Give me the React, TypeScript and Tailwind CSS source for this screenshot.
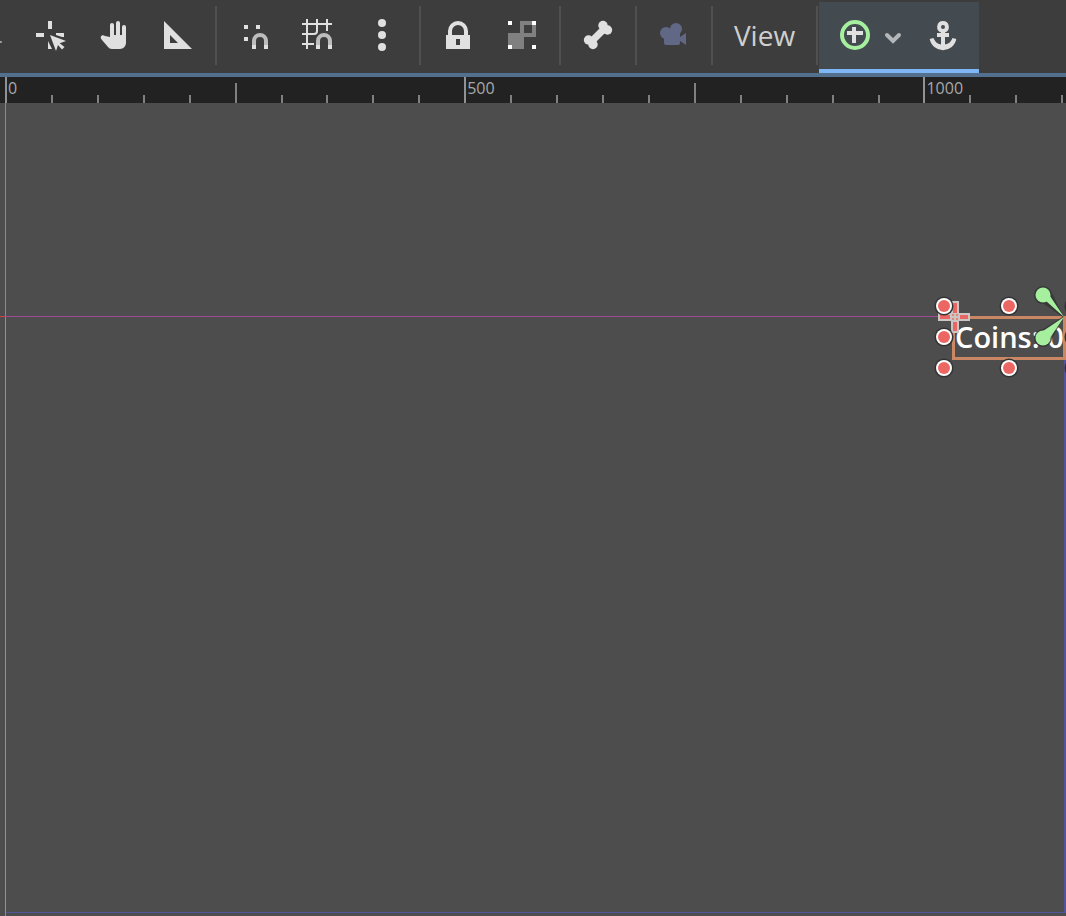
import type { ReactNode } from "react";

const LIGHT = "#e0e0e0";

function Icon({ children }: { children: ReactNode }) {
  return (
    <svg viewBox="0 0 32 32" className="size-8" fill={LIGHT} aria-hidden="true">
      {children}
    </svg>
  );
}

function ToolButton({ label, children }: { label: string; children: ReactNode }) {
  return (
    <button type="button" aria-label={label} className="flex h-[70px] w-16 shrink-0 items-center justify-center self-start">
      <Icon>{children}</Icon>
    </button>
  );
}

function Separator() {
  return <div className="mx-[5px] h-[59px] w-0.5 shrink-0 bg-[#505050]" />;
}

function Magnet() {
  return (
    <>
      <path d="M14 26v-4a8 8 0 0 1 16 0v4h-4v-4a4 4 0 0 0-8 0v4z" fill="#bdbdbd" />
      <path d="M14 26h4v4h-4zM26 26h4v4h-4z" />
    </>
  );
}

function Toolbar() {
  return (
    <div role="toolbar" className="flex h-[73px] items-start overflow-hidden bg-[#3d3d3d] text-[#cfcfcf]">
      <div className="flex h-[71px] shrink-0 items-center">
        <div className="mt-3 mr-4 h-0.5 w-0.5 shrink-0 rounded-r bg-[#a0a0a0]" />
        <ToolButton label="Pivot">
          <path d="M14 2h4v8h-4zM2 14h8v4H2zM22 14h8v4h-2l-6-2zM14 22l4 8h-4z" />
          <path d="M16 16l16 6-6.300 2.200 4.800 3.800-2.500 2.500-4-4.500-2 6z" />
        </ToolButton>
        <ToolButton label="Pan">
          <path d="M12 18V6a2 2 0 0 1 4 0v10h2V4a2 2 0 0 1 4 0v12h2V8a2 2 0 0 1 4 0v16a6 6 0 0 1-6 6h-8c-2 0-3-1-4-2l-6-7c-3-3 0-6 3-4z" />
        </ToolButton>
        <ToolButton label="Ruler">
          <path fillRule="evenodd" d="M2 2v28h28zM8 16l8 8H8z" />
        </ToolButton>
        <Separator />
        <ToolButton label="Smart snap">
          <path d="M6 6h4v4H6zM18 6h4v4h-4zM6 18h4v4H6z" />
          <Magnet />
        </ToolButton>
        <ToolButton label="Grid snap">
          <path d="M5 0v30M0 5h30M15 0v12q0 3-3 3H0M25 0v12M0 25h12" fill="none" stroke={LIGHT} strokeWidth="2" />
          <Magnet />
        </ToolButton>
        <ToolButton label="Snapping options">
          <circle cx="16" cy="4" r="4" />
          <circle cx="16" cy="16" r="4" />
          <circle cx="16" cy="28" r="4" />
        </ToolButton>
        <Separator />
        <ToolButton label="Lock">
          <path fillRule="evenodd" d="M16 2a10 10 0 0 0-10 10v4H4v14h24V16h-2v-4A10 10 0 0 0 16 2zm0 4a6 6 0 0 1 6 6v4H10v-4a6 6 0 0 1 6-6zm-2 14h4v6h-4z" />
        </ToolButton>
        <ToolButton label="Group">
          <path fillRule="evenodd" fill="#808080" d="M14 2h16v16H18v12H2V14h12zM18 6v8h8V6z" />
          <path fill="#ffffff" d="M2 2h4v4H2zM26 2h4v4h-4zM2 26h4v4H2zM26 26h4v4h-4z" />
        </ToolButton>
        <Separator />
        <ToolButton label="Skeleton options">
          <path d="M10 22L22 10" stroke={LIGHT} strokeWidth="7" />
          <circle cx="21" cy="6.500" r="4.700" />
          <circle cx="25.500" cy="11" r="4.700" />
          <circle cx="6.500" cy="21" r="4.700" />
          <circle cx="11" cy="25.500" r="4.700" />
        </ToolButton>
        <Separator />
        <ToolButton label="Camera override">
          <g fill="#616886">
            <circle cx="18" cy="10" r="6" />
            <circle cx="8" cy="14" r="6" />
            <path d="M6 12h16v6l6-4v12l-6-4v2q0 2-2 2H8q-2 0-2-2z" />
          </g>
        </ToolButton>
        <Separator />
        <button type="button" className="h-[70px] w-[93px] shrink-0 self-start font-['Open_Sans','Noto_Sans',sans-serif] text-[28px]">
          View
        </button>
        <div className="ml-[5px] h-[59px] w-0.5 shrink-0 bg-[#505050]" />
      </div>
      <div className="mt-0.5 ml-px flex h-[71px] w-40 shrink-0 items-start border-b-4 border-[#7fb6f5] bg-[#434a50]">
        <button type="button" aria-label="Sizing settings" className="flex h-[66px] w-[92px] items-center gap-[10px] pl-5">
          <Icon>
            <circle cx="16" cy="16" r="13" fill="none" stroke="#a5ef9f" strokeWidth="4" />
            <path d="M13 8h4v4h7v4h-7v8h-4v-8H8v-4h5z" />
          </Icon>
          <svg viewBox="0 0 24 24" className="size-6" fill="none" stroke="#b4b7b9" strokeWidth="4" strokeLinecap="round" strokeLinejoin="miter" aria-hidden="true">
            <path d="M6 12l6 6 6-6" />
          </svg>
        </button>
        <button type="button" aria-label="Anchor settings" className="flex h-[66px] w-16 items-center justify-center">
          <Icon>
            <path fillRule="evenodd" d="M16 2a6 6 0 0 0-2 11.600V14h-4v4h4v7.600A10 10 0 0 1 6.500 19l-3.800 1a13.500 13.500 0 0 0 26.600 0l-3.800-1a10 10 0 0 1-7.500 6.600V18h4v-4h-4v-.4A6 6 0 0 0 16 2zm0 4a2 2 0 1 1 0 4 2 2 0 0 1 0-4z" />
          </Icon>
        </button>
      </div>
    </div>
  );
}

const TICKS = Array.from({ length: 24 }, (_, i) => i);

function Ruler() {
  return (
    <div className="relative h-[30px] overflow-hidden border-t-4 border-[#54708f] bg-[#222222]">
      <div className="-mt-1 flex h-[30px] w-[1107px] items-end pl-[5px]">
        {TICKS.map((i) => (
          <div key={i} className="flex h-full min-w-0 flex-1 items-end">
            <div className={i % 10 === 0 ? "h-full w-0.5 shrink-0 bg-[#909395]" : i % 5 === 0 ? "h-5 w-0.5 bg-[#808080]" : "h-2 w-0.5 bg-[#808080]"} />
            {i % 10 === 0 && (
              <span className="mb-1 ml-px font-['Open_Sans','Noto_Sans',sans-serif] text-[16px] leading-[22px] text-[#a8a8a8]">
                {i * 50}
              </span>
            )}
          </div>
        ))}
      </div>
    </div>
  );
}

const HANDLES = [
  [944, 203],
  [1009, 203],
  [944, 234],
  [944, 265],
  [1009, 265],
  [1074, 203],
  [1074, 234],
  [1074, 265],
];

function Viewport() {
  return (
    <main className="relative flex-1 overflow-hidden bg-[#4d4d4d]">
      <div className="absolute top-[213px] bottom-[3px] left-[5px] w-[1061px] border-r-2 border-b border-[#53539a]" />
      <div className="absolute inset-y-0 left-[5px] w-px bg-[#7c9f45]" />
      <div className="absolute top-[214px] bottom-1 left-[5px] w-px bg-[#85988a]" />
      <div className="absolute top-[213px] left-0 h-px w-[954px] bg-[#a04a96]" />
      <div className="absolute top-[213px] left-0 h-px w-[5px] bg-[#d0404c]" />
      <div className="absolute top-[213px] left-[952px] h-11 w-[114px] border-[3px] border-[#c98763] font-['Open_Sans','Noto_Sans',sans-serif] text-[29px] leading-[36px] font-semibold whitespace-nowrap text-white">
        Coins: 0
      </div>
      <svg className="absolute top-0 left-0 h-[400px] w-[1100px]" aria-hidden="true">
        <path d="M951 198h8v12h11v8h-11v12h-8v-12h-13v-8h13z" fill="#cbc5c4" />
        <path d="M953 200h4v10h-4zM953 219h4v9h-4zM940 212h10v4h-10zM960 212h8v4h-8z" fill="#e96662" />
        <path d="M952 211h2v2h-2zM956 211h2v2h-2zM952 215h2v2h-2zM956 215h2v2h-2z" fill="#e08578" />
        <g fill="#333333" fillOpacity="0.8">
          <path d="M1044 201a9 9 0 1 1 7-13L1064 215zM1052 236a9 9 0 1 1-9-10L1064 213z" />
        </g>
        {HANDLES.map(([x, y]) => (
          <g key={`${x}-${y}`}>
            <circle cx={x} cy={y} r="9.500" fill="#333333" />
            <circle cx={x} cy={y} r="8" fill="#ffffff" />
            <circle cx={x} cy={y} r="6" fill="#ec6763" />
          </g>
        ))}
        <g fill="#a5ef9f">
          <circle cx="1043" cy="192" r="7.500" />
          <circle cx="1043" cy="235" r="7.500" />
          <path d="M1046 198L1064 214 1050 193zM1043 228L1064 214 1050 235z" />
        </g>
      </svg>
    </main>
  );
}

export default function App() {
  return (
    <div className="flex h-screen flex-col overflow-hidden">
      <Toolbar />
      <Ruler />
      <Viewport />
    </div>
  );
}
